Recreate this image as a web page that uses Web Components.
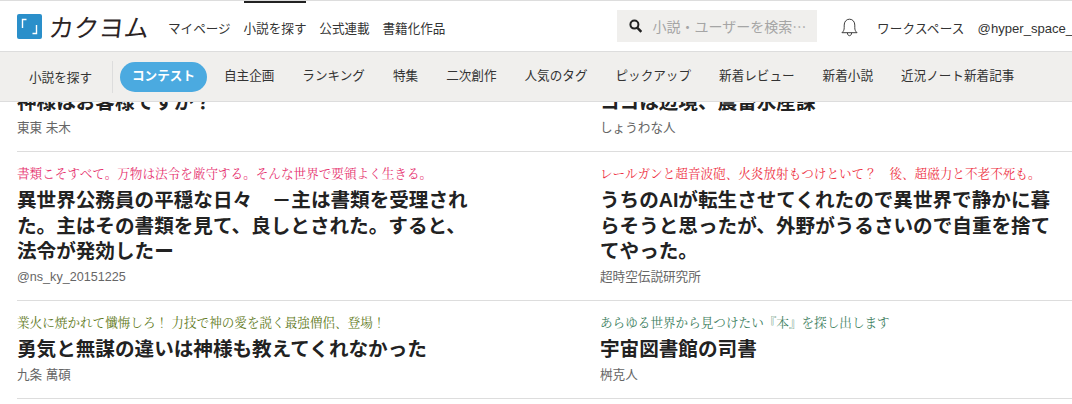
<!DOCTYPE html>
<html lang="ja"><head><meta charset="utf-8">
<style>
html,body{margin:0;padding:0;background:#fff;overflow:hidden}
body{font-family:"Liberation Sans","Noto Sans CJK JP",sans-serif;color:#222;width:1072px;height:404px}
</style></head><body>
<kk-header></kk-header>
<kk-subnav></kk-subnav>
<kk-list>
  <kk-work title-text="神様はお客様ですか？" author="東東 未木"></kk-work>
  <kk-work title-text="ココは辺境、農畜水産課" author="しょうわな人"></kk-work>
  <kk-work catch="書類こそすべて。万物は法令を厳守する。そんな世界で要領よく生きる。" color="#e6336f" title-text="異世界公務員の平穏な日々　－主は書類を受理された。主はその書類を見て、良しとされた。すると、法令が発効したー" author="@ns_ky_20151225"></kk-work>
  <kk-work catch="レールガンと超音波砲、火炎放射もつけといて？　後、超磁力と不老不死も。" color="#ee3345" title-text="うちのAIが転生させてくれたので異世界で静かに暮らそうと思ったが、外野がうるさいので自重を捨ててやった。" author="超時空伝説研究所"></kk-work>
  <kk-work catch="業火に焼かれて懺悔しろ！ 力技で神の愛を説く最強僧侶、登場！" color="#5f7a22" title-text="勇気と無謀の違いは神様も教えてくれなかった" author="九条 萬碩"></kk-work>
  <kk-work catch="あらゆる世界から見つけたい『本』を探し出します" color="#3d8060" title-text="宇宙図書館の司書" author="桝克人"></kk-work>
</kk-list>
<script>
class Base extends HTMLElement{
  constructor(){super();this.attachShadow({mode:'open'})}
}
class KkHeader extends Base{
  connectedCallback(){this.shadowRoot.innerHTML=`<style>
  :host{display:flex;align-items:center;height:51px;box-sizing:border-box;border-top:1px solid #ddd;background:#fff;padding-left:17px;white-space:nowrap;overflow:hidden;position:relative}
  .logo{display:flex;align-items:center;gap:7px;width:151px;flex:none}
  .mark{width:25px;height:25px;flex:none;display:block}
  .word{font:400 25px/1 "Noto Sans CJK JP",sans-serif;color:#2b2323;letter-spacing:0;display:block;transform:skewX(-6deg)}
  nav{display:flex;gap:12.8px;font-size:12.6px;color:#333;margin-top:3px}
  nav a{position:relative;display:block;padding:0}
  nav a.on::before{content:"";position:absolute;left:0;right:0;top:-19px;height:4px;background:#222}
  .search{margin-left:172px;width:200px;height:32px;background:#f0efed;display:flex;align-items:center;flex:none;padding-left:12px;box-sizing:border-box;gap:10px;color:#a5a5a5;font:14px "Noto Sans CJK JP",sans-serif;margin-top:-1px}
  .bell{margin-left:24px;flex:none;display:block;margin-top:2px}
  .ws{margin-left:18.500px;font-size:12.6px;letter-spacing:.2px;color:#333;flex:none;margin-top:2px}
  .user{margin-left:13px;font-size:13.1px;color:#333;flex:none;margin-top:5px}
  </style>
  <div class="logo"><svg class="mark" viewBox="0 0 25 25"><rect width="25" height="25" rx="2" fill="#2a8fca"/><path d="M5.500 14V5.500H9.500M19.500 11V19.500H15.500" fill="none" stroke="#fff" stroke-width="1.400"/></svg><span class="word">カクヨム</span></div>
  <nav><a>マイページ</a><a class="on">小説を探す</a><a>公式連載</a><a>書籍化作品</a></nav>
  <div class="search"><svg width="13" height="14" viewBox="0 0 13 14"><circle cx="5.400" cy="5.600" r="4" fill="none" stroke="#222" stroke-width="2"/><path d="M8.500 8.800L12.300 12.800" stroke="#222" stroke-width="2.400"/></svg><span>小説・ユーザーを検索…</span></div>
  <svg class="bell" width="17" height="19" viewBox="0 0 18 20"><path d="M1 15.500c1.800-1.600 2.400-3 2.400-5.500V7.500C3.400 4 5.500 1.200 9 1.200s5.600 2.800 5.600 6.300V10c0 2.500.6 3.900 2.400 5.500zM6.800 15.800c0 1.700 1 2.900 2.200 2.900s2.200-1.200 2.200-2.900" fill="none" stroke="#333" stroke-width="1"/></svg>
  <span class="ws">ワークスペース</span><span class="user">@hyper_space_lab</span>`}
}
class KkSubnav extends Base{
  connectedCallback(){
    const items=[['コンテスト',1],['自主企画'],['ランキング'],['特集'],['二次創作'],['人気のタグ'],['ピックアップ'],['新着レビュー'],['新着小説'],['近況ノート新着記事']];
    this.shadowRoot.innerHTML=`<style>
    :host{display:flex;align-items:center;height:51px;box-sizing:border-box;background:#f0efed;border-top:1px solid #ddd;border-bottom:1px solid #ddd;font-size:12.6px;color:#333;white-space:nowrap;position:relative}
    .head{width:113px;height:32px;box-sizing:border-box;border-right:1px solid #ddd;display:flex;align-items:center;flex:none;padding-left:29px}
    .items{display:flex;align-items:center;padding-left:7px;gap:0}
    a{display:block;padding:0 14px 1px;line-height:29px}
    a.on{background:#4baae0;color:#fff;border-radius:15px;font-weight:700;padding:0 12px 1px;margin-right:3px}
    </style><div class="head">小説を探す</div><div class="items">${items.map(i=>`<a class="${i[1]?'on':''}">${i[0]}</a>`).join('')}</div>`}
}
class KkList extends Base{
  connectedCallback(){this.shadowRoot.innerHTML=`<style>
    :host{display:block;height:302px;overflow:hidden;background:#fff}
    .grid{display:grid;grid-template-columns:583px 472px;margin:-48px 0 0 17px}
    </style><div class="grid"><slot></slot></div>`}
}
class KkWork extends Base{
  connectedCallback(){
    const c=this.getAttribute('catch'),col=this.getAttribute('color');
    this.shadowRoot.innerHTML=`<style>
    :host{display:block;border-bottom:1px solid #ddd;padding:11px 0 14.500px;box-sizing:border-box}
    .catch{font:12.6px/19px "Noto Serif CJK JP","Liberation Serif",serif;color:${col||'#333'};height:19px;white-space:nowrap}
    h3{margin:6px 0 3px;font:700 19.6px/25.5px "Liberation Sans","Noto Sans CJK JP",sans-serif;color:#222;width:460px}
    .author{font-size:12.6px;line-height:18px;color:#666}
    </style><div class="catch">${c||''}</div><h3>${this.getAttribute('title-text')}</h3><div class="author">${this.getAttribute('author')}</div>`}
}
customElements.define('kk-header',KkHeader);
customElements.define('kk-subnav',KkSubnav);
customElements.define('kk-list',KkList);
customElements.define('kk-work',KkWork);
</script>
</body></html>
